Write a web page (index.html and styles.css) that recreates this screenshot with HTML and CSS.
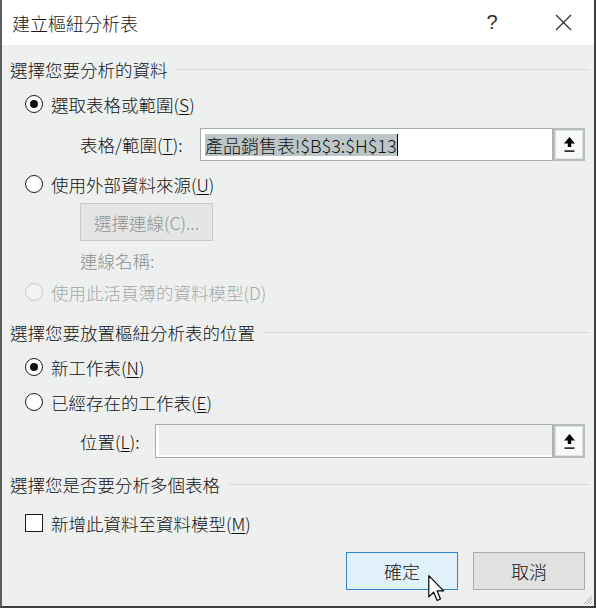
FILE: index.html
```html
<!DOCTYPE html>
<html lang="zh-TW">
	<head>
		<meta charset="UTF-8" />
		<meta name="viewport" content="width=device-width, initial-scale=1.0" />
		<title>建立樞紐分析表</title>
		<link rel="stylesheet" href="styles.css">
	</head>
	<body>
		<div class="dialog">
			<div class="titlebar">
				<span class="title">建立樞紐分析表</span>
				<span class="tb-btn tb-help">?</span>
				<span class="tb-btn tb-close">
					<svg width="17" height="17" viewBox="0 0 17 17"><path d="M1 1 L16 16 M16 1 L1 16" stroke="#2b2b2b" stroke-width="1.2" fill="none" /></svg>
				</span>
			</div>

			<div class="content">
				<!-- 資料來源 -->
				<div class="group">
					<div class="group-head">選擇您要分析的資料</div>
					<label class="radio-row row-first">
						<span class="radio checked"></span>
						<span>選取表格或範圍(<u>S</u>)</span>
					</label>
					<div class="field-row">
						<span class="field-label range-label">表格/範圍(<u>T</u>):</span>
						<div class="field">
							<span class="sel">產品銷售表!$B$3:$H$13</span><span class="caret"></span>
						</div>
						<span class="ref-btn">
							<svg width="11" height="15" viewBox="0 0 11 15"><path d="M5.5 0 L11 6.5 H7.2 V10 H3.8 V6.5 H0 Z" fill="#000" /><rect x="0.5" y="13.4" width="10" height="1.4" fill="#000" /></svg>
						</span>
					</div>
					<label class="radio-row">
						<span class="radio"></span>
						<span>使用外部資料來源(<u>U</u>)</span>
					</label>
					<button class="conn-btn" disabled>選擇連線(C)...</button>
					<div class="conn-name">連線名稱:</div>
					<label class="radio-row disabled row-tight">
						<span class="radio"></span>
						<span>使用此活頁簿的資料模型(D)</span>
					</label>
				</div>

				<!-- 放置位置 -->
				<div class="group group-place">
					<div class="group-head">選擇您要放置樞紐分析表的位置</div>
					<label class="radio-row row-first">
						<span class="radio checked"></span>
						<span>新工作表(<u>N</u>)</span>
					</label>
					<label class="radio-row">
						<span class="radio"></span>
						<span>已經存在的工作表(<u>E</u>)</span>
					</label>
					<div class="field-row loc-row">
						<span class="field-label loc-label">位置(<u>L</u>):</span>
						<div class="field field-off"></div>
						<span class="ref-btn">
							<svg width="11" height="15" viewBox="0 0 11 15"><path d="M5.5 0 L11 6.5 H7.2 V10 H3.8 V6.5 H0 Z" fill="#000" /><rect x="0.5" y="13.4" width="10" height="1.4" fill="#000" /></svg>
						</span>
					</div>
				</div>

				<!-- 多個表格 -->
				<div class="group group-multi">
					<div class="group-head">選擇您是否要分析多個表格</div>
					<label class="radio-row check-row">
						<span class="checkbox"></span>
						<span>新增此資料至資料模型(<u>M</u>)</span>
					</label>
				</div>

				<div class="actions">
					<button class="btn btn-primary">確定</button>
					<button class="btn">取消</button>
				</div>
			</div>

			<svg class="pointer" width="17" height="27" viewBox="0 0 13 21">
				<path d="M0.5 0.5 L0.5 17 L4.3 13.4 L7 19.8 L9.6 18.7 L7 12.4 L12 12.4 Z" fill="#fff" stroke="#000" stroke-width="0.9" stroke-linejoin="round" />
			</svg>
			<svg class="grip" width="11" height="11" viewBox="0 0 11 11">
				<path d="M10 2 L2 10 M10 5 L5 10 M10 8 L8 10" stroke="#a9acac" stroke-width="1" fill="none" />
			</svg>
		</div>
	</body>
</html>
```

FILE: styles.css
```css
* {
	box-sizing: border-box;
	margin: 0;
	padding: 0;
}
body {
	font-family: "Noto Sans CJK TC", "Noto Sans", sans-serif;
	font-weight: 300;
	background-color: #eef0f0;
	color: #111;
}
u {
	text-decoration-thickness: 1px;
	text-underline-offset: 2px;
}
.dialog {
	position: relative;
	width: 596px;
	height: 608px;
	display: flex;
	flex-direction: column;
	background: #eef0f0;
	border-left: 2px solid #5c5e5e;
	border-right: 2px solid #3e4040;
	border-bottom: 2px solid #3e4040;
}
.titlebar {
	height: 45px;
	display: flex;
	align-items: center;
	background: #fff;
	padding-left: 10px;
	padding-right: 16px;
}
.title {
	font-size: 18px;
	color: #1a1a1a;
}
.tb-btn {
	width: 30px;
	display: flex;
	justify-content: center;
	align-items: center;
	color: #2b2b2b;
}
.tb-help {
	margin-left: auto;
	margin-right: 41px;
	font-size: 20px;
	font-family: "Liberation Sans", sans-serif;
	font-weight: 400;
}
.content {
	flex: 1;
	display: flex;
	flex-direction: column;
	padding: 12px 4px 0 8px;
	font-size: 17.5px;
}
.group {
	display: flex;
	flex-direction: column;
}
.group-place {
	margin-top: 16px;
}
.group-multi {
	margin-top: 14px;
}
.group-head {
	height: 24px;
	display: flex;
	align-items: center;
}
.group-head::after {
	content: "";
	flex: 1;
	height: 1px;
	margin-left: 8px;
	background: #d5dadb;
}
.radio-row {
	height: 24px;
	display: flex;
	align-items: center;
	gap: 8px;
	padding-left: 15px;
	margin-top: 11px;
}
.row-first {
	margin-top: 11px;
}
.row-tight {
	margin-top: 8px;
}
.check-row {
	margin-top: 15px;
}
.radio {
	width: 18px;
	height: 18px;
	border: 1.5px solid #1c1c1c;
	border-radius: 50%;
	background: #fff;
	display: flex;
	justify-content: center;
	align-items: center;
}
.radio.checked::after {
	content: "";
	width: 8px;
	height: 8px;
	border-radius: 50%;
	background: #111;
}
.radio-row.disabled {
	color: #a5a8a8;
}
.radio-row.disabled .radio {
	border-color: #c9cbcb;
	background: #f2f3f3;
}
.checkbox {
	width: 18px;
	height: 18px;
	border: 1.5px solid #1c1c1c;
	background: #fff;
}
.field-row {
	display: flex;
	align-items: center;
	height: 33px;
	padding-left: 70px;
	padding-right: 5px;
	margin-top: 12px;
}
.loc-row {
	height: 34px;
	margin-top: 10px;
}
.field-label {
	flex-shrink: 0;
}
.range-label {
	width: 120px;
}
.loc-label {
	width: 75px;
}
.field {
	flex: 1;
	height: 100%;
	display: flex;
	align-items: center;
	background: #fff;
	border: 1px solid #a9acac;
	padding-left: 4px;
	font-size: 18px;
}
.field-off {
	background: #eef0f0;
	box-shadow: inset 3px 0 0 #fff, inset 0 -2px 0 #fff;
}
.sel {
	background: #bcc6c9;
	line-height: 22px;
}
.caret {
	width: 1px;
	height: 22px;
	background: #000;
}
.ref-btn {
	width: 32px;
	height: 100%;
	display: flex;
	justify-content: center;
	align-items: center;
	background: #f7f8f8;
	border: 2px solid #b8bcbc;
	box-shadow: inset 0 0 0 1px #dfe2e2;
}
.conn-btn {
	width: 133px;
	height: 38px;
	margin-left: 70px;
	margin-top: 7px;
	background: #e4e6e6;
	border: 1px solid #c8caca;
	color: #8f9292;
	font-family: inherit;
	font-weight: inherit;
	font-size: 17.5px;
}
.conn-name {
	height: 24px;
	display: flex;
	align-items: center;
	padding-left: 70px;
	margin-top: 7px;
	color: #8c8f8f;
}
.actions {
	display: flex;
	justify-content: flex-end;
	gap: 15px;
	margin-top: 17px;
	padding-right: 5px;
}
.btn {
	width: 112px;
	height: 38px;
	background: #e1e1e1;
	border: 1px solid #adadad;
	font-family: inherit;
	font-weight: inherit;
	font-size: 18px;
	color: #111;
}
.btn-primary {
	background: #e1f1fa;
	border-color: #2f86cf;
}
.pointer {
	position: absolute;
	left: 426px;
	top: 575px;
}
.grip {
	position: absolute;
	right: 1px;
	bottom: 1px;
}
```
